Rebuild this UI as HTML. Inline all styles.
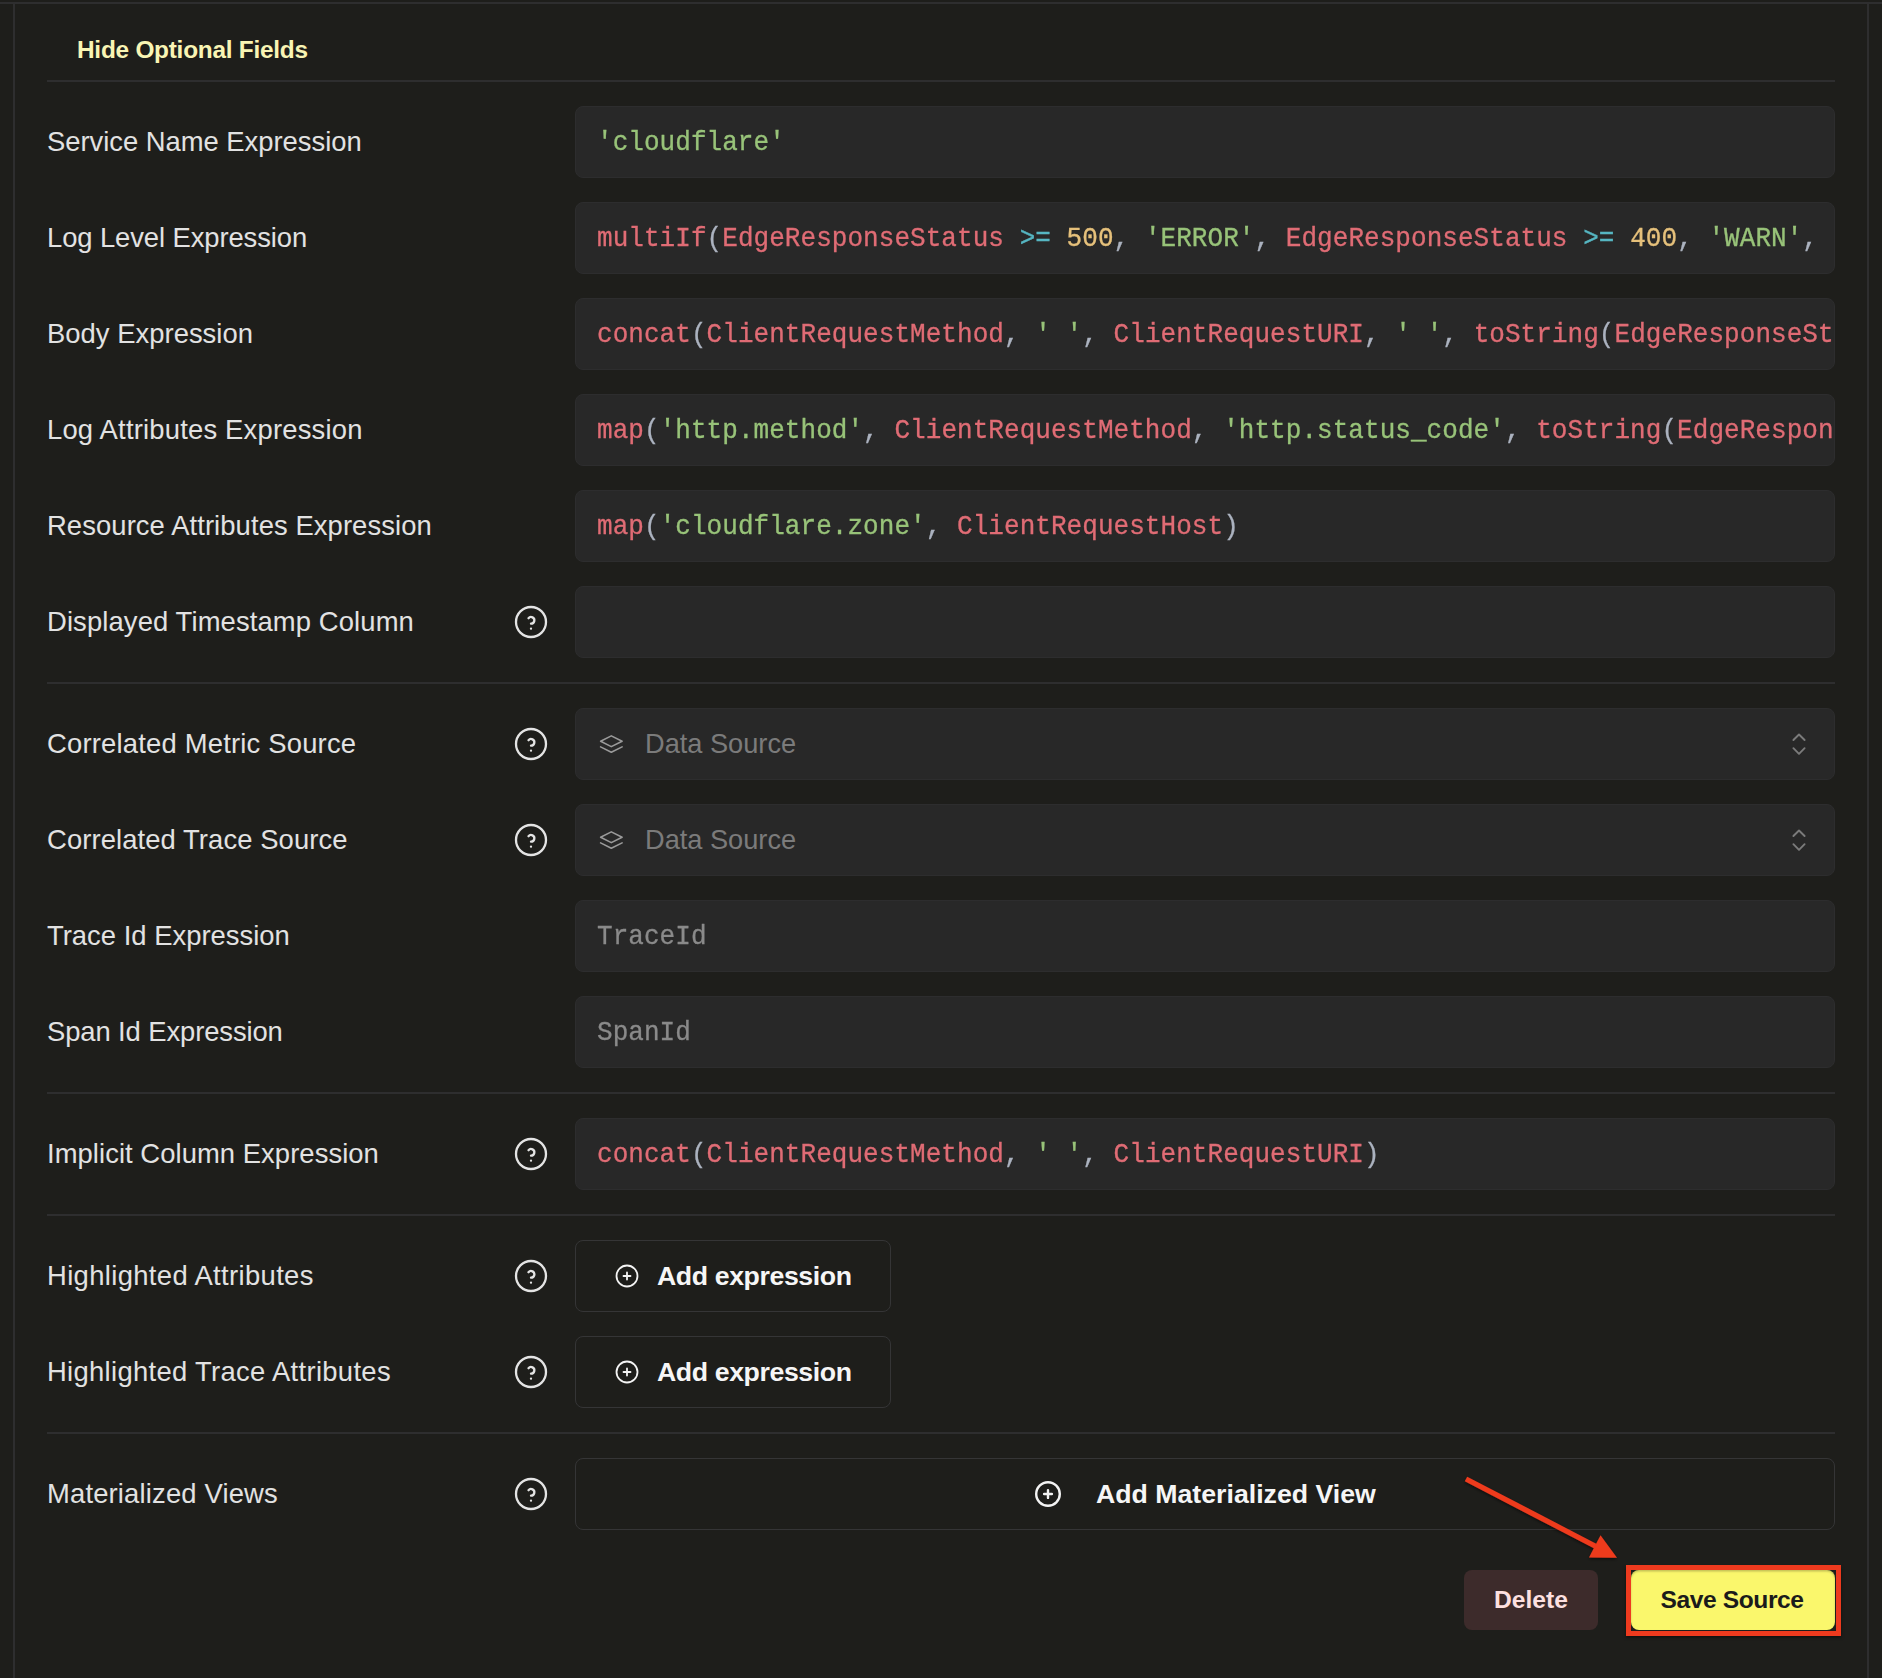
<!DOCTYPE html>
<html><head><meta charset="utf-8"><style>
html,body{margin:0;padding:0;width:1882px;height:1678px;overflow:hidden;background:#1e1e1b;}
body{position:relative;font-family:"Liberation Sans",sans-serif;}
.a{position:absolute;}
.hl{position:absolute;left:0;width:1882px;height:2px;background:#2e2e2f;}
.vl{position:absolute;top:2px;width:2px;height:1676px;background:#2e2e2f;}
.sep{position:absolute;left:47px;width:1788px;height:2px;background:#2e2e2f;}
.lbl{position:absolute;left:47px;height:72px;line-height:72px;font-size:27.4px;color:#e2e2e2;white-space:nowrap;}
.inp{position:absolute;left:575px;width:1258px;height:70px;border:1px solid #2d2d2e;background:#282828;border-radius:8px;overflow:hidden;}
.code{position:absolute;left:21px;top:0;height:70px;line-height:70px;font-family:"Liberation Mono",monospace;font-size:26px;white-space:pre;color:#abb2bf;width:1237px;overflow:hidden;transform:scaleY(1.04);transform-origin:0 45px;top:0.7px;-webkit-text-stroke:0.3px currentColor;letter-spacing:0.05px;}
.r{color:#e06c75}.g{color:#98c379}.o{color:#e5c07b}.c{color:#56b6c2}
.ph{color:#8a8a8a}
.btn{position:absolute;left:575px;width:314px;height:70px;border:1px solid #353536;border-radius:8px;}
.bt{position:absolute;top:0;height:70px;line-height:70px;font-size:26.7px;font-weight:bold;color:#f6f6f6;white-space:nowrap;}
.ds{position:absolute;left:69px;top:0;height:70px;line-height:70px;font-size:27.2px;color:#7b7b7b;white-space:nowrap;}
</style></head>
<body>
<div class="hl" style="top:2px"></div>
<div class="vl" style="left:13px"></div>
<div class="vl" style="left:1867px"></div>
<div class="a" style="left:77px;top:30px;height:40px;line-height:40px;font-size:24.4px;font-weight:bold;color:#f9f5b4;white-space:nowrap;letter-spacing:-0.25px">Hide Optional Fields</div>
<div class="sep" style="top:80px"></div>
<div class="lbl" style="top:106px;letter-spacing:-0.02px">Service Name Expression</div>
<div class="inp" style="top:106px"><div class="code"><span class="g">'cloudflare'</span></div></div>
<div class="lbl" style="top:202px;letter-spacing:-0.09px">Log Level Expression</div>
<div class="inp" style="top:202px"><div class="code"><span class="r">multiIf</span>(<span class="r">EdgeResponseStatus</span> <span class="c">&gt;=</span> <span class="o">500</span>, <span class="g">'ERROR'</span>, <span class="r">EdgeResponseStatus</span> <span class="c">&gt;=</span> <span class="o">400</span>, <span class="g">'WARN'</span>,</div></div>
<div class="lbl" style="top:298px;letter-spacing:0.03px">Body Expression</div>
<div class="inp" style="top:298px"><div class="code"><span class="r">concat</span>(<span class="r">ClientRequestMethod</span>, <span class="g">' '</span>, <span class="r">ClientRequestURI</span>, <span class="g">' '</span>, <span class="r">toString</span>(<span class="r">EdgeResponseSt</span></div></div>
<div class="lbl" style="top:394px;letter-spacing:0.2px">Log Attributes Expression</div>
<div class="inp" style="top:394px"><div class="code"><span class="r">map</span>(<span class="g">'http.method'</span>, <span class="r">ClientRequestMethod</span>, <span class="g">'http.status_code'</span>, <span class="r">toString</span>(<span class="r">EdgeRespon</span></div></div>
<div class="lbl" style="top:490px;letter-spacing:0.09px">Resource Attributes Expression</div>
<div class="inp" style="top:490px"><div class="code"><span class="r">map</span>(<span class="g">'cloudflare.zone'</span>, <span class="r">ClientRequestHost</span>)</div></div>
<div class="lbl" style="top:586px;letter-spacing:0.12px">Displayed Timestamp Column</div>
<div class="inp" style="top:586px"></div>
<div class="sep" style="top:682px"></div>
<div class="lbl" style="top:708px;letter-spacing:0.2px">Correlated Metric Source</div>
<div class="inp" style="top:708px"><div class="ds">Data Source</div></div>
<div class="lbl" style="top:804px;letter-spacing:0.095px">Correlated Trace Source</div>
<div class="inp" style="top:804px"><div class="ds">Data Source</div></div>
<div class="lbl" style="top:900px;letter-spacing:0.01px">Trace Id Expression</div>
<div class="inp" style="top:900px"><div class="code ph">TraceId</div></div>
<div class="lbl" style="top:996px;letter-spacing:-0.1px">Span Id Expression</div>
<div class="inp" style="top:996px"><div class="code ph">SpanId</div></div>
<div class="sep" style="top:1092px"></div>
<div class="lbl" style="top:1118px;letter-spacing:0.06px">Implicit Column Expression</div>
<div class="inp" style="top:1118px"><div class="code"><span class="r">concat</span>(<span class="r">ClientRequestMethod</span>, <span class="g">' '</span>, <span class="r">ClientRequestURI</span>)</div></div>
<div class="sep" style="top:1214px"></div>
<div class="lbl" style="top:1240px;letter-spacing:0.36px">Highlighted Attributes</div>
<div class="btn" style="top:1240px"><div class="bt" style="left:81px;letter-spacing:-0.4px">Add expression</div></div>
<div class="lbl" style="top:1336px;letter-spacing:0.32px">Highlighted Trace Attributes</div>
<div class="btn" style="top:1336px"><div class="bt" style="left:81px;letter-spacing:-0.4px">Add expression</div></div>
<div class="sep" style="top:1432px"></div>
<div class="lbl" style="top:1458px;letter-spacing:0.17px">Materialized Views</div>
<div class="btn" style="top:1458px;width:1258px"><div class="bt" style="left:520px">Add Materialized View</div></div>
<div class="a" style="left:1464px;top:1570px;width:134px;height:60px;border-radius:8px;background:#3d2b2b;color:#fde0e0;font-size:24.6px;font-weight:bold;line-height:60px;text-align:center">Delete</div>
<div class="a" style="left:1626px;top:1565px;width:205px;height:61px;border:5px solid #ee3a1e;box-shadow:0 1.5px 3px rgba(0,0,0,0.5);"></div>
<div class="a" style="left:1631px;top:1570px;width:204px;height:60px;border-radius:8px;background:#faf76c;box-shadow:inset 0 1.5px 2px rgba(0,0,0,0.22);color:#1b1b1b;font-size:24.6px;font-weight:bold;line-height:60px;text-align:center;letter-spacing:-0.4px;padding-right:2px;box-sizing:border-box">Save Source</div>
<svg class="a" style="left:0;top:0" width="1882" height="1678" viewBox="0 0 1882 1678">
<g transform="translate(511,602) scale(1.6667)" fill="none" stroke="#e4e4e4" stroke-width="1.38" stroke-linecap="round" stroke-linejoin="round"><circle cx="12" cy="12" r="9"/><path d="M12 16v.01"/><path d="M12 13a2 2 0 0 0 .914 -3.782a1.98 1.98 0 0 0 -2.414 .483"/></g>
<g transform="translate(511,724) scale(1.6667)" fill="none" stroke="#e4e4e4" stroke-width="1.38" stroke-linecap="round" stroke-linejoin="round"><circle cx="12" cy="12" r="9"/><path d="M12 16v.01"/><path d="M12 13a2 2 0 0 0 .914 -3.782a1.98 1.98 0 0 0 -2.414 .483"/></g>
<g transform="translate(0,0)" fill="none" stroke="#9a9a9a" stroke-width="1.6" stroke-linecap="round" stroke-linejoin="round"><path d="M611.3 735.9 L600.6 741.2 L611.3 746.6 L622.1 741.2 Z"/><path d="M600.6 746.9 L611.3 752.2 L622.1 746.9"/></g>
<g transform="translate(0,0)" fill="none" stroke="#7b7b7b" stroke-width="1.9" stroke-linecap="round" stroke-linejoin="round"><path d="M1793.4 740 L1799 734.5 L1804.6 740"/><path d="M1793.4 748.2 L1799 753.8 L1804.6 748.2"/></g>
<g transform="translate(511,820) scale(1.6667)" fill="none" stroke="#e4e4e4" stroke-width="1.38" stroke-linecap="round" stroke-linejoin="round"><circle cx="12" cy="12" r="9"/><path d="M12 16v.01"/><path d="M12 13a2 2 0 0 0 .914 -3.782a1.98 1.98 0 0 0 -2.414 .483"/></g>
<g transform="translate(0,96)" fill="none" stroke="#9a9a9a" stroke-width="1.6" stroke-linecap="round" stroke-linejoin="round"><path d="M611.3 735.9 L600.6 741.2 L611.3 746.6 L622.1 741.2 Z"/><path d="M600.6 746.9 L611.3 752.2 L622.1 746.9"/></g>
<g transform="translate(0,96)" fill="none" stroke="#7b7b7b" stroke-width="1.9" stroke-linecap="round" stroke-linejoin="round"><path d="M1793.4 740 L1799 734.5 L1804.6 740"/><path d="M1793.4 748.2 L1799 753.8 L1804.6 748.2"/></g>
<g transform="translate(511,1134) scale(1.6667)" fill="none" stroke="#e4e4e4" stroke-width="1.38" stroke-linecap="round" stroke-linejoin="round"><circle cx="12" cy="12" r="9"/><path d="M12 16v.01"/><path d="M12 13a2 2 0 0 0 .914 -3.782a1.98 1.98 0 0 0 -2.414 .483"/></g>
<g transform="translate(511,1256) scale(1.6667)" fill="none" stroke="#e4e4e4" stroke-width="1.38" stroke-linecap="round" stroke-linejoin="round"><circle cx="12" cy="12" r="9"/><path d="M12 16v.01"/><path d="M12 13a2 2 0 0 0 .914 -3.782a1.98 1.98 0 0 0 -2.414 .483"/></g>
<g fill="none" stroke="#f4f4f4" stroke-width="1.8" stroke-linecap="round"><circle cx="627" cy="1276" r="10.5"/><path d="M623.5 1276h7.0M627 1272.5v7.0"/></g>
<g transform="translate(511,1352) scale(1.6667)" fill="none" stroke="#e4e4e4" stroke-width="1.38" stroke-linecap="round" stroke-linejoin="round"><circle cx="12" cy="12" r="9"/><path d="M12 16v.01"/><path d="M12 13a2 2 0 0 0 .914 -3.782a1.98 1.98 0 0 0 -2.414 .483"/></g>
<g fill="none" stroke="#f4f4f4" stroke-width="1.8" stroke-linecap="round"><circle cx="627" cy="1372" r="10.5"/><path d="M623.5 1372h7.0M627 1368.5v7.0"/></g>
<g transform="translate(511,1474) scale(1.6667)" fill="none" stroke="#e4e4e4" stroke-width="1.38" stroke-linecap="round" stroke-linejoin="round"><circle cx="12" cy="12" r="9"/><path d="M12 16v.01"/><path d="M12 13a2 2 0 0 0 .914 -3.782a1.98 1.98 0 0 0 -2.414 .483"/></g>
<g fill="none" stroke="#f4f4f4" stroke-width="2.4" stroke-linecap="round"><circle cx="1048" cy="1494" r="11.8"/><path d="M1044.1 1494h7.8M1048 1490.1v7.8"/></g>
<defs><filter id="sh" x="-20%" y="-20%" width="140%" height="140%"><feDropShadow dx="0" dy="1.5" stdDeviation="1.5" flood-color="#000" flood-opacity="0.55"/></filter></defs><g filter="url(#sh)"><line x1="1466" y1="1479" x2="1596" y2="1546.5" stroke="#ee3a1e" stroke-width="5.2" stroke-linecap="butt"/><path d="M1600.5 1535.3 L1589 1557.6 L1617 1557.8 Z" fill="#ee3a1e"/></g>
</svg>
</body></html>
